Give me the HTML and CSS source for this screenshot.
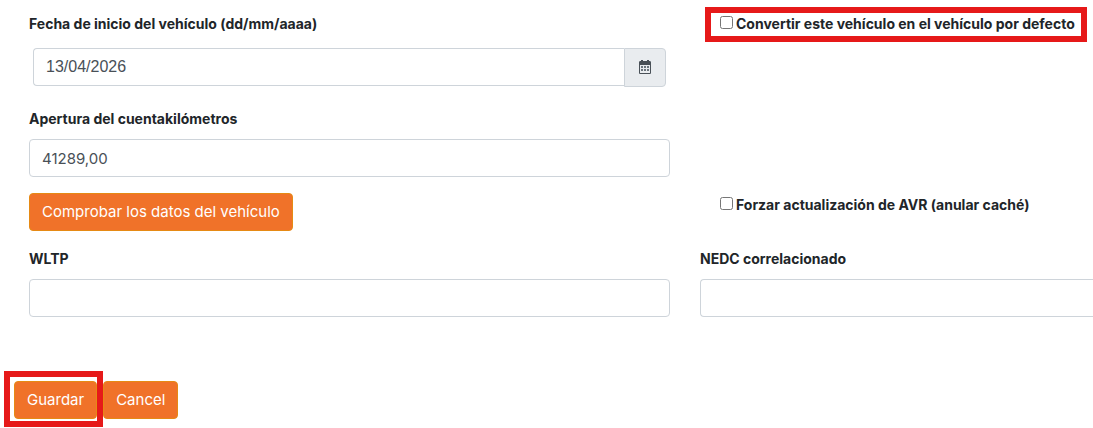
FILE: index.html
```html
<!DOCTYPE html>
<html lang="es">
<head>
<meta charset="utf-8">
<meta name="viewport" content="width=device-width, initial-scale=1">
<title>Vehículo</title>
<link rel="stylesheet" href="styles.css">
</head>
<body>
<form class="vehicle-form" id="vehicle">
  <div class="row">
    <div class="field date-field">
      <label for="start">Fecha de inicio del vehículo (dd/mm/aaaa)</label>
      <div class="input-group">
        <input class="control" id="start" type="text" value="13/04/2026">
        <button class="addon" type="button" aria-label="Abrir calendario">
          <svg width="12" height="14" viewBox="0 0 12 14" aria-hidden="true">
            <path fill="#495057" fill-rule="evenodd" d="M2 0h2v1h4V0h2v1h.7C11.4 1 12 1.6 12 2.3v10.4c0 .7-.6 1.3-1.3 1.3H1.3C.6 14 0 13.4 0 12.7V2.3C0 1.6.6 1 1.3 1H2zM1 5v8h10V5z"/>
            <path fill="#6c757d" d="M2 6h2v2H2zM5 6h2v2H5zM8 6h2v2H8zM2 9h2v2H2zM5 9h2v2H5zM8 9h2v2H8z"/>
          </svg>
        </button>
      </div>
    </div>
    <div class="check">
      <span class="marked marked-check"><input id="default" type="checkbox"><label for="default">Convertir este vehículo en el vehículo por defecto</label></span>
    </div>
  </div>
  <div class="row">
    <div class="field">
      <label for="odometer">Apertura del cuentakilómetros</label>
      <input class="control" id="odometer" type="text" value="41289,00">
    </div>
  </div>
  <div class="row">
    <div><button class="btn" type="button">Comprobar los datos del vehículo</button></div>
    <div class="check">
      <span class="marked"><input id="force" type="checkbox"><label for="force">Forzar actualización de AVR (anular caché)</label></span>
    </div>
  </div>
  <div class="row">
    <div class="field">
      <label for="wltp">WLTP</label>
      <input class="control" id="wltp" type="text">
    </div>
    <div class="field">
      <label for="nedc">NEDC correlacionado</label>
      <input class="control control-open" id="nedc" type="text">
    </div>
  </div>
</form>
<div class="actions">
  <span class="marked marked-save"><button class="btn" type="submit" form="vehicle">Guardar</button></span>
  <button class="btn" type="button">Cancel</button>
</div>
</body>
</html>
```
FILE: styles.css
```css
* { box-sizing: border-box; }

body {
  margin: 0;
  background: #fff;
  color: #212529;
  font: 15px/24px Inter, "Liberation Sans", sans-serif;
}

.vehicle-form {
  display: flex;
  flex-direction: column;
  gap: 16px;
  padding: 12px 0 0 29px;
}

.row {
  display: grid;
  grid-template-columns: 641fr 393fr;
  column-gap: 30px;
}

.field {
  display: flex;
  flex-direction: column;
  gap: 8px;
}

label {
  font-size: 14px;
  font-weight: 700;
}

.date-field {
  gap: 12px;
  padding-bottom: 4px;
}

.input-group {
  display: flex;
  padding: 0 4px;
}

.control {
  width: 100%;
  height: 38px;
  padding: 0 12px;
  border: 1px solid #ced4da;
  border-radius: 4px;
  background: #fff;
  color: #495057;
  font: inherit;
}

.control-open {
  border-right: 0;
  border-radius: 4px 0 0 4px;
}

.input-group .control {
  flex: 1;
  min-width: 0;
  border-right: 0;
  border-radius: 4px 0 0 4px;
  font-family: "Liberation Sans", sans-serif;
  font-size: 16px;
}

.addon {
  display: flex;
  align-items: center;
  justify-content: center;
  width: 42px;
  height: 39px;
  padding: 0 0 2px;
  border: 1px solid #ced4da;
  border-radius: 0 4px 4px 0;
  background: #e9ecef;
}

.check { padding-left: 20px; }

.marked {
  position: relative;
  display: inline-flex;
  align-items: center;
  gap: 3px;
}

.marked input {
  width: 13px;
  height: 13px;
  margin: 0 0 3px;
}

.marked-check::after,
.marked-save::after {
  content: "";
  position: absolute;
  border: 6px solid #e61919;
  pointer-events: none;
}

.marked-check::after { inset: -5px -12px -6px -15px; }

.marked-save::after { inset: -10px -6px -8px -10px; }

.btn {
  height: 38px;
  padding: 0 12px;
  border: 1px solid #e68a14;
  border-radius: 4px;
  background: #f07229;
  color: #fff;
  font: inherit;
}

.actions {
  display: flex;
  gap: 6px;
  padding: 64px 14px 9px;
}
```
